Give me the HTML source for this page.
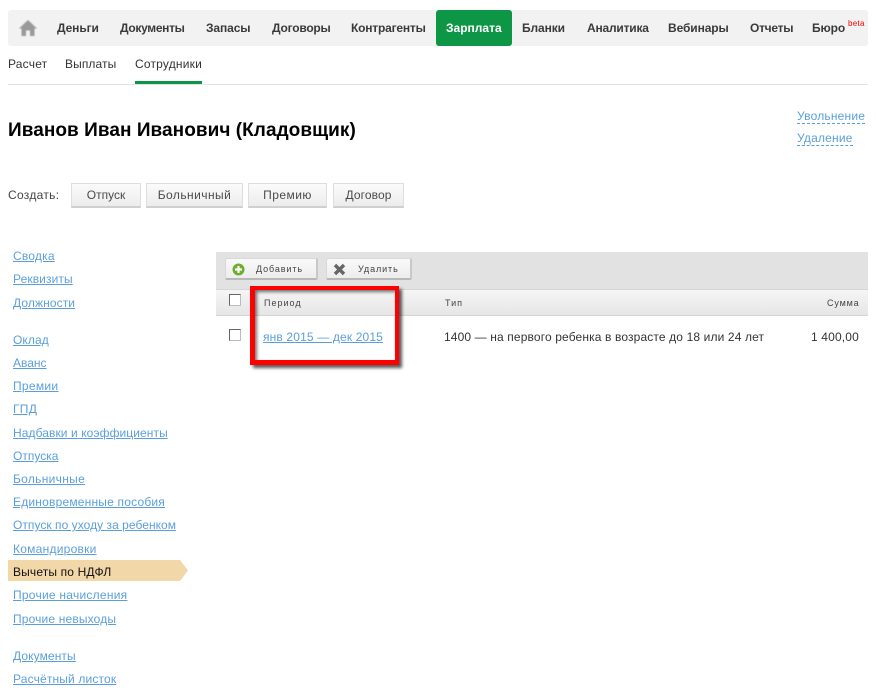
<!DOCTYPE html>
<html><head><meta charset="utf-8"><style>
html,body{margin:0;padding:0;background:#fff;overflow:hidden}
body{width:876px;height:700px;position:relative;font:12px "Liberation Sans",sans-serif;color:#333}
.a{position:absolute}
.t{position:absolute;white-space:nowrap;line-height:16px;height:16px}
.n{font-weight:bold;color:#3a3a3a;top:20px}
.l{color:#5a9fdc;text-decoration:underline;left:13px;letter-spacing:.1px}
.b{position:absolute;top:183px;height:22px;line-height:22px;text-align:center;border:1px solid #dedede;border-bottom:2px solid #cfcfcf;background:linear-gradient(#fbfbfb,#ececec);color:#4a4a4a;box-sizing:content-box}
.tb{position:absolute;top:258px;height:19px;border:1px solid #d8d8d8;border-bottom:2px solid #b8b8b8;border-right:2px solid #c8c8c8;background:linear-gradient(#f9f9f9,#ededed);border-radius:2px}
.cb{position:absolute;left:229px;width:10px;height:10px;border:1px solid #666;border-right-color:#bbb;border-bottom-color:#bbb;background:#fff}
.h{font-size:9px;letter-spacing:1px;color:#444;top:295px}
</style></head><body>
<div class="a" style="left:8px;top:10px;width:860px;height:36px;background:#f2f2f2;border-radius:3px"></div>
<svg class="a" style="left:18px;top:19px;filter:blur(.4px)" width="20" height="18" viewBox="0 0 20 18"><path d="M10 1 L19 9.5 L16.5 9.5 L16.5 17 L12 17 L12 11.5 L8 11.5 L8 17 L3.5 17 L3.5 9.5 L1 9.5 Z" fill="#9a9a9a"/></svg>
<div class="a" style="left:436px;top:10px;width:76px;height:36px;background:#0e9647;border-radius:3px"></div>
<span class="t n" style="left:57px;letter-spacing:-.1px">Деньги</span>
<span class="t n" style="left:120px;letter-spacing:-.32px">Документы</span>
<span class="t n" style="left:206px;letter-spacing:-.1px">Запасы</span>
<span class="t n" style="left:272px;letter-spacing:-.22px">Договоры</span>
<span class="t n" style="left:351px;letter-spacing:-.2px">Контрагенты</span>
<span class="t n" style="left:446px;color:#fff;letter-spacing:0">Зарплата</span>
<span class="t n" style="left:522px;letter-spacing:-.1px">Бланки</span>
<span class="t n" style="left:587px;letter-spacing:-.2px">Аналитика</span>
<span class="t n" style="left:668px;letter-spacing:-.1px">Вебинары</span>
<span class="t n" style="left:750px;letter-spacing:-.27px">Отчеты</span>
<span class="t n" style="left:812px;letter-spacing:-.1px">Бюро</span>
<span class="t" style="left:848px;top:17px;font-size:8px;line-height:14px;height:14px;color:#f00;letter-spacing:.3px">beta</span>

<span class="t" style="left:8px;top:56px;letter-spacing:.2px">Расчет</span>
<span class="t" style="left:65px;top:56px;letter-spacing:.1px">Выплаты</span>
<span class="t" style="left:135px;top:56px;letter-spacing:.2px">Сотрудники</span>
<div class="a" style="left:8px;top:84px;width:860px;height:1px;background:#e3e3e3"></div>
<div class="a" style="left:135px;top:81px;width:67px;height:3px;background:#0e9647"></div>

<span class="t" style="left:8px;top:120px;font-size:19px;line-height:22px;height:22px;font-weight:bold;color:#000;letter-spacing:.06px">Иванов Иван Иванович (Кладовщик)</span>
<span class="t" style="left:797px;top:108px;color:#5a9fdc;border-bottom:1px dashed #5a9fdc;height:15px;line-height:17px;letter-spacing:.2px">Увольнение</span>
<span class="t" style="left:797px;top:130px;color:#5a9fdc;border-bottom:1px dashed #5a9fdc;height:15px;line-height:17px;letter-spacing:.2px">Удаление</span>

<span class="t" style="left:8px;top:187px;color:#444;letter-spacing:.3px">Создать:</span>
<div class="b" style="left:71px;width:68px">Отпуск</div>
<div class="b" style="left:146px;width:95px;letter-spacing:.45px">Больничный</div>
<div class="b" style="left:248px;width:77px;letter-spacing:.45px">Премию</div>
<div class="b" style="left:333px;width:69px;letter-spacing:.1px">Договор</div>

<span class="t l" style="top:248px;letter-spacing:.2px">Сводка</span>
<span class="t l" style="top:271px">Реквизиты</span>
<span class="t l" style="top:295px">Должности</span>
<span class="t l" style="top:332px">Оклад</span>
<span class="t l" style="top:355px;letter-spacing:0">Аванс</span>
<span class="t l" style="top:378px;letter-spacing:.3px">Премии</span>
<span class="t l" style="top:401px;letter-spacing:.3px">ГПД</span>
<span class="t l" style="top:425px;letter-spacing:.08px">Надбавки и коэффициенты</span>
<span class="t l" style="top:448px;letter-spacing:0">Отпуска</span>
<span class="t l" style="top:471px;letter-spacing:.3px">Больничные</span>
<span class="t l" style="top:494px;letter-spacing:.2px">Единовременные пособия</span>
<span class="t l" style="top:517px;letter-spacing:.04px">Отпуск по уходу за ребенком</span>
<span class="t l" style="top:541px;letter-spacing:.25px">Командировки</span>
<svg class="a" style="left:8px;top:560px" width="180" height="21"><path d="M0 0H172L180 10.5L172 21H0Z" fill="#f2d7a8"/></svg>
<span class="t" style="left:13px;top:564px;color:#111;letter-spacing:.15px">Вычеты по НДФЛ</span>
<span class="t l" style="top:587px;letter-spacing:.25px">Прочие начисления</span>
<span class="t l" style="top:611px;letter-spacing:.15px">Прочие невыходы</span>
<span class="t l" style="top:648px">Документы</span>
<span class="t l" style="top:671px;letter-spacing:.15px">Расчётный листок</span>

<div class="a" style="left:216px;top:252px;width:652px;height:37px;background:#e2e2e2"></div>
<div class="a" style="left:216px;top:289px;width:652px;height:27px;box-sizing:border-box;border-top:1px solid #d5d5d5;border-bottom:1px solid #d5d5d5;background:linear-gradient(#f5f5f5,#e6e6e6)"></div>
<div class="tb" style="left:225px;width:90px"></div>
<svg class="a" style="left:232px;top:263px" width="13" height="13"><circle cx="6.5" cy="6.5" r="6" fill="#6fae2c"/><path d="M6.5 3v7M3 6.5h7" stroke="#fff" stroke-width="2.2"/></svg>
<span class="t" style="left:256px;top:261px;font-size:9px;letter-spacing:.9px;color:#444">Добавить</span>
<div class="tb" style="left:326px;width:83px"></div>
<svg class="a" style="left:333px;top:263px" width="13" height="13"><path d="M2 2L11 11M11 2L2 11" stroke="#666" stroke-width="3.4"/></svg>
<span class="t" style="left:358px;top:261px;font-size:9px;letter-spacing:.9px;color:#444">Удалить</span>

<div class="cb" style="top:294px"></div>
<span class="t h" style="left:264px">Период</span>
<span class="t h" style="left:445px">Тип</span>
<span class="t h" style="left:827px;letter-spacing:.85px">Сумма</span>
<div class="cb" style="top:329px"></div>
<span class="t" style="left:263px;top:329px;color:#5a9fdc;text-decoration:underline;letter-spacing:.15px">янв 2015 — дек 2015</span>
<span class="t" style="left:444px;top:329px;letter-spacing:.13px">1400 — на первого ребенка в возрасте до 18 или 24 лет</span>
<span class="t" style="left:811px;top:329px;letter-spacing:.15px">1 400,00</span>

<div class="a" style="left:250px;top:286px;width:140px;height:70px;border-style:solid;border-color:#f00;border-width:4px 4px 5px 5px;box-shadow:3px 3px 3px rgba(0,0,0,.65),inset 2px 2px 3px rgba(0,0,0,.55)"></div>
</body></html>
